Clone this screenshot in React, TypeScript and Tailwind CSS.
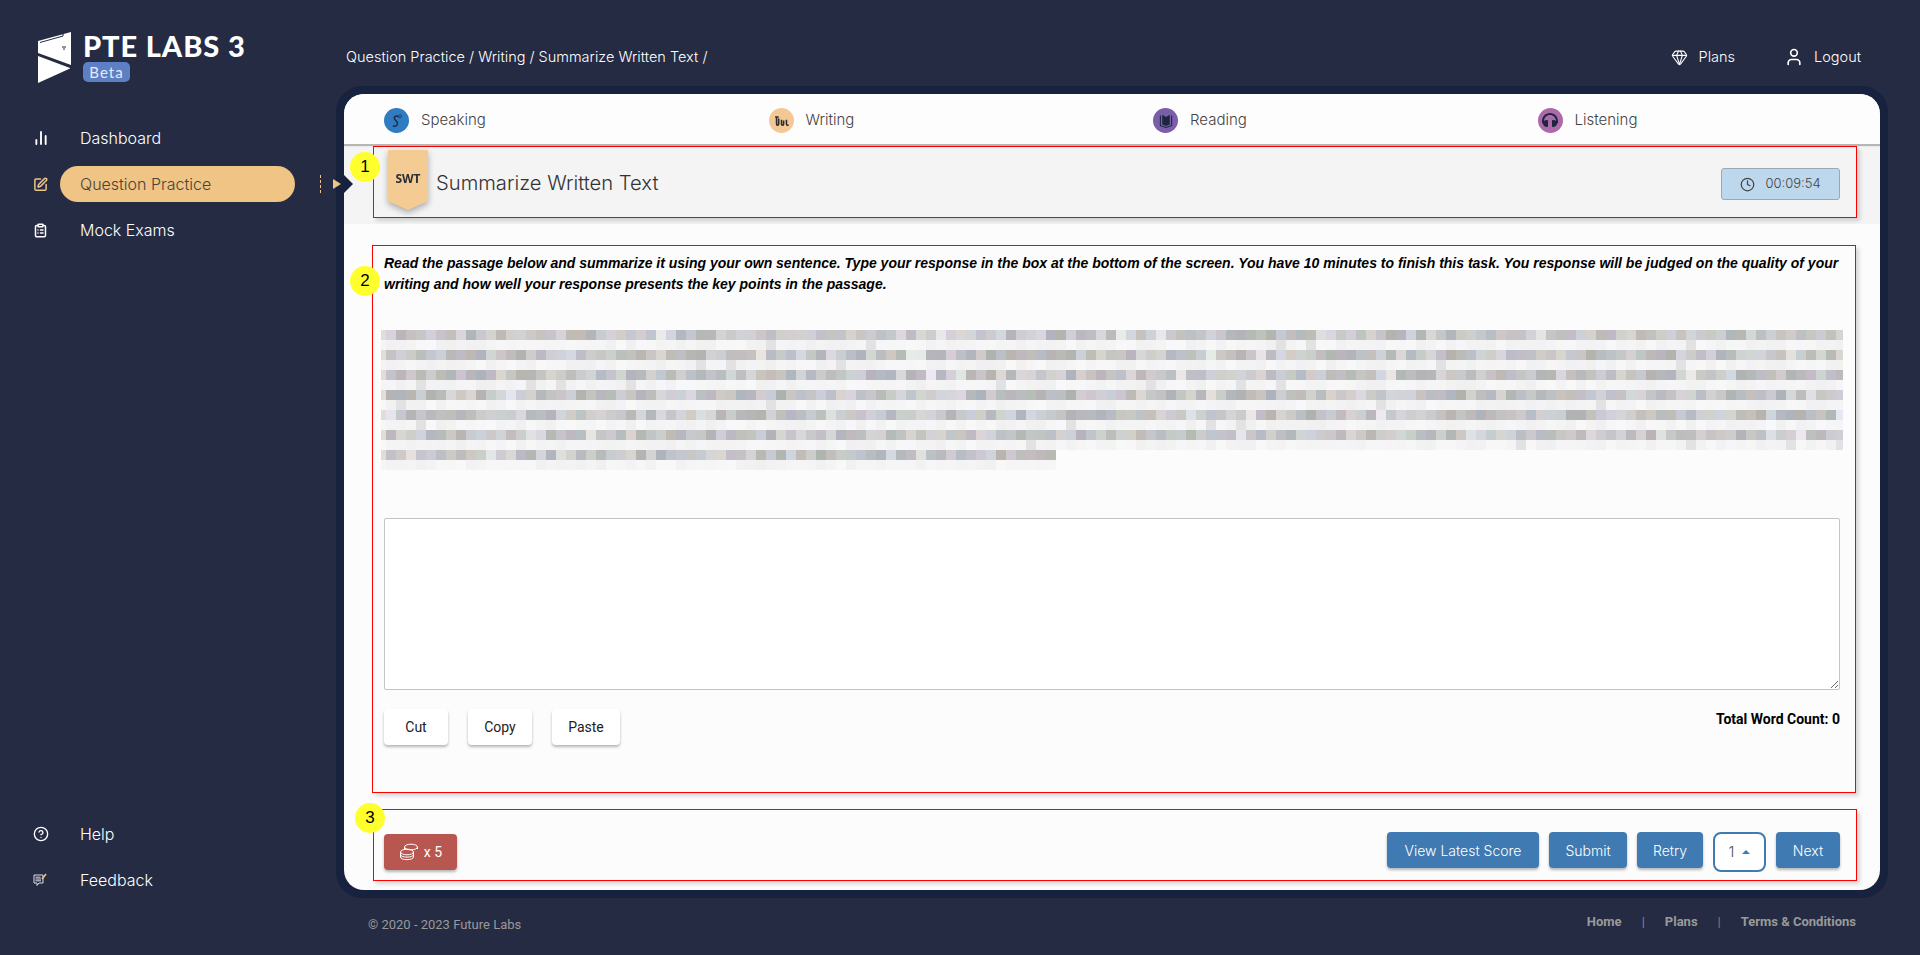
import { BarChart2, ClipboardList, Clock, CircleHelp, Gem, SquarePen, User } from 'lucide-react';
import { FaHeadphones } from 'react-icons/fa';
import type { ReactNode } from 'react';

const gothic = "font-['Inter','Open_Sans',sans-serif]";

// pixelated passage: 7 lines, each a dark row and a light row of 10px cells
function makeRows() {
  let seed = 4821;
  const rand = () => {
    seed = (seed * 16807) % 2147483647;
    return seed / 2147483647;
  };
  const rows: string[][] = [];
  for (let line = 0; line < 7; line++) {
    const count = line === 6 ? 68 : 147;
    const dark: string[] = [];
    const light: string[] = [];
    for (let i = 0; i < count; i++) {
      const tintR = Math.round(rand() * 14 - 7);
      const tintB = Math.round(rand() * 18 - 7);
      const gap = rand() < 0.03;
      const base = gap ? 222 + rand() * 14 : 178 + rand() * 38;
      const g = Math.round(base);
      dark.push(`rgb(${g + tintR},${g},${g + tintB})`);
      const soft = rand() < 0.03 ? 226 : 240 + Math.round(rand() * 8);
      light.push(`rgb(${soft},${soft},${soft + Math.round(rand() * 2)})`);
    }
    dark[0] = '#e6dcd6';
    rows.push(dark, light);
  }
  return rows;
}

const rows = makeRows();

function Logo() {
  return (
    <div className="flex items-start pl-[38px] pt-[31px]">
      <svg viewBox="0 0 34 52" className="w-[34px] h-[52px] flex-none fill-white">
        <path d="M0 10 L33 1 L33 34 L0 22 Z" />
        <path d="M0 25 L32 37 L32 37.5 L0 52 Z" />
        <path d="M2 11.5 L25 5 V3" fill="none" stroke="#252b42" strokeWidth="1" />
        <path d="M24 16 h4 M25 18 h2" stroke="#252b42" strokeWidth="1" />
      </svg>
      <div className="ml-[11px] flex flex-col items-start">
        <span className="font-['Lato',sans-serif] font-black text-[29px] leading-[30px] tracking-[0.9px] text-white whitespace-nowrap">PTE LABS 3</span>
        <span className="mt-[1px] w-[47px] h-[20px] rounded-[5px] bg-[#5d7fc4] text-center font-['Lato',sans-serif] text-[15px] leading-[20px] tracking-[1px] text-[#e4ebf8]">Beta</span>
      </div>
    </div>
  );
}

function NavItem({ icon, label, active }: { icon: ReactNode; label: string; active?: boolean }) {
  return (
    <div className="flex items-center h-[36px] pl-[33px]">
      <div className={`w-[27px] flex-none ${active ? 'text-[#efc484]' : 'text-white'}`}>{icon}</div>
      <div className={`w-[235px] flex-none h-[36px] rounded-full pl-[20px] flex items-center ${gothic} font-light text-[16px] ${active ? 'bg-[#efc484] text-[#4a4338]' : 'text-white'}`}>
        {label}
      </div>
      {active && (
        <>
          <div className="ml-[25px] flex-none h-[18px] border-l border-dashed border-[#efc484]" />
          <svg viewBox="0 0 8 10" className="ml-[12px] flex-none w-[8px] h-[10px] fill-[#efc484]">
            <path d="M0 0 L8 5 L0 10 Z" />
          </svg>
        </>
      )}
    </div>
  );
}

function Sidebar() {
  return (
    <aside className="relative z-10 w-[336px] flex-none flex flex-col pb-[57px]">
      <Logo />
      <nav className="mt-[37px] flex flex-col gap-[10px]">
        <NavItem icon={<BarChart2 size={16} strokeWidth={2.8} />} label="Dashboard" />
        <NavItem active icon={<SquarePen size={15} strokeWidth={2.4} />} label="Question Practice" />
        <NavItem icon={<ClipboardList size={15} strokeWidth={2.4} />} label="Mock Exams" />
      </nav>
      <nav className="mt-auto flex flex-col gap-[10px]">
        <NavItem icon={<CircleHelp size={16} strokeWidth={2} />} label="Help" />
        <NavItem
          icon={
            <svg viewBox="0 0 14 14" className="w-[14px] h-[14px] fill-none stroke-[#d8dde8]" strokeWidth="1">
              <path d="M1 2 H10 V10 H6 L4 12.5 V10 H1 Z" />
              <path d="M2.5 4.2 H7.5 M2.5 6 H8 M2.5 7.8 H8" />
              <path d="M9 6 L13 1" strokeWidth="1.6" className="stroke-[#efc484]" />
            </svg>
          }
          label="Feedback"
        />
      </nav>
    </aside>
  );
}

function TabItem({ color, icon, label }: { color: string; icon: ReactNode; label: string }) {
  return (
    <div className="flex items-center">
      <div className={`w-[25px] h-[25px] rounded-full flex items-center justify-center ${color}`}>{icon}</div>
      <span className={`ml-[12px] ${gothic} font-light text-[15px] text-[#444]`}>{label}</span>
    </div>
  );
}

function Marker({ n, className }: { n: number; className: string }) {
  return (
    <div className={`absolute w-[30px] h-[30px] rounded-full bg-[#ffff2e] flex items-center justify-center font-['Liberation_Sans',sans-serif] text-[17px] text-black z-10 ${className}`}>
      {n}
    </div>
  );
}

function WhiteButton({ label, width }: { label: string; width: string }) {
  return (
    <button className={`${width} h-[36px] rounded-[4px] bg-white font-['Roboto',sans-serif] text-[14px] text-[#222] shadow-[0_2px_3px_rgba(0,0,0,0.28)]`}>
      {label}
    </button>
  );
}

function BlueButton({ label, width }: { label: string; width: string }) {
  return (
    <button className={`${width} h-[36px] rounded-[4px] bg-[#3f7ab3] ${gothic} font-light text-[14px] text-white shadow-[0_2px_3px_rgba(0,0,0,0.28)]`}>
      {label}
    </button>
  );
}

function Passage() {
  return (
    <div className="-ml-[3px] w-[1462px] overflow-hidden">
      {rows.map((row, r) => (
        <div key={r} className="flex h-[10px]">
          {row.map((c, i) => (
            <div key={i} className={`h-[10px] flex-none ${i === 0 ? 'w-[5px]' : 'w-[10px]'}`} style={{ backgroundColor: c }} />
          ))}
        </div>
      ))}
    </div>
  );
}

function Panel() {
  return (
    <div className="relative bg-[#16223e] rounded-[26px] p-[8px]">
      <svg viewBox="0 0 9 18" className="absolute left-[8px] top-[89px] w-[9px] h-[18px] fill-[#16223e] z-10">
        <path d="M0 0 L9 9 L0 18 Z" />
      </svg>
      <div className="h-[796px] rounded-[20px] overflow-hidden bg-[#fcfcfc]">
        <div className="relative z-[1] h-[50px] bg-[#fdfdfd] pl-[40px] pt-[2px] grid grid-cols-[384.5px_384.5px_384.5px_1fr] items-center shadow-[0_2px_1px_rgba(0,0,0,0.25)]">
          <TabItem
            color="bg-[#2f7cc1]"
            label="Speaking"
            icon={
              <svg viewBox="0 0 24 24" className="w-[17px] h-[17px] fill-none stroke-[#1d2b48]" strokeWidth="2">
                <path d="M15 7 C11 4 7 7 10 11 C13 14 15 16 12 19 C10 21 8 20 7 19" />
                <circle cx="17" cy="6" r="2" strokeWidth="1" />
              </svg>
            }
          />
          <TabItem
            color="bg-[#f4c894]"
            label="Writing"
            icon={
              <svg viewBox="0 0 24 24" className="w-[17px] h-[17px] fill-none stroke-[#2b2b2b]" strokeWidth="2.2">
                <path d="M5 7 V17 C5 19 8 19 8 17 V9 M12 11 V17 C12 19 15 19 15 17 V12 M19 11 V17 C19 19 21 19 22 18 M3 7 H8" />
              </svg>
            }
          />
          <TabItem
            color="bg-[#7a5ea8]"
            label="Reading"
            icon={
              <svg viewBox="0 0 24 24" className="w-[18px] h-[18px]">
                <path d="M7 5 L12 8 L17 5 V18 L12 20 L7 18 Z" fill="#1d2540" />
                <path d="M4.5 6 V19.5 L12 22 L19.5 19.5 V6" fill="none" stroke="#1d2540" strokeWidth="1.4" />
              </svg>
            }
          />
          <TabItem color="bg-[#ac6aa9]" label="Listening" icon={<FaHeadphones size={16} className="text-[#1d2540]" />} />
        </div>

        <div className="h-[80px] bg-[#f4f4f4] pt-[2px] pl-[29px] pr-[23px]">
          <div className="relative h-[72px] border border-[#f00] flex items-start shadow-[3px_3px_4px_rgba(0,0,0,0.15)]">
            <Marker n={1} className="-left-[24px] top-[5px]" />
            <div className="ml-[14px] mt-[3px] drop-shadow-[0_3px_3px_rgba(0,0,0,0.3)]">
              <div className="w-[40px] h-[60px] bg-[#f5cb94] pt-[21px] text-center font-['Open_Sans',sans-serif] font-bold text-[12px] leading-[16px] text-[#2c2c34] [clip-path:polygon(0_0,100%_0,100%_85%,50%_100%,0_85%)]">
                SWT
              </div>
            </div>
            <h1 className={`ml-[8px] mt-[22px] ${gothic} font-light text-[20.2px] leading-[28px] text-[#333]`}>Summarize Written Text</h1>
            <div className={`ml-auto mr-[16px] mt-[21px] w-[119px] h-[32px] rounded-[3px] bg-[#bdd7ec] border border-[#9aa8b4] flex items-center justify-center gap-[10px] ${gothic} font-light text-[13px] text-[#444]`}>
              <Clock size={15} strokeWidth={2} />
              00:09:54
            </div>
          </div>
        </div>

        <div className="pt-[21px] pl-[28px] pr-[24px]">
          <div className="relative h-[548px] border border-[#f00] pl-[11px] pr-[15px] pt-[7px] shadow-[3px_3px_4px_rgba(0,0,0,0.15)]">
            <Marker n={2} className="-left-[23px] top-[20px]" />
            <p className="font-['Liberation_Sans',sans-serif] font-bold italic text-[14px] leading-[21px] text-black">
              Read the passage below and summarize it using your own sentence. Type your response in the box at the bottom of the screen. You have 10 minutes to finish this task. You response will be judged on the quality of your writing and how well your response presents the key points in the passage.
            </p>
            <div className="mt-[35px]">
              <Passage />
            </div>
            <textarea className="mt-[48px] block w-full h-[172px] rounded-[2px] border border-[#c4c4c4] bg-white outline-none" />
            <div className="mt-[19px] flex items-start">
              <div className="flex gap-[20px]">
                <WhiteButton label="Cut" width="w-[64px]" />
                <WhiteButton label="Copy" width="w-[64px]" />
                <WhiteButton label="Paste" width="w-[68px]" />
              </div>
              <span className="ml-auto font-['Roboto',sans-serif] font-bold text-[14px] leading-[20px] text-black">Total Word Count: 0</span>
            </div>
          </div>
        </div>

        <div className="pt-[16px] pl-[29px] pr-[23px]">
          <div className="relative h-[72px] border border-[#f00] pl-[10px] pr-[16px] pt-[22px] flex items-start justify-between shadow-[3px_3px_4px_rgba(0,0,0,0.15)]">
            <Marker n={3} className="-left-[19px] -top-[7px]" />
            <button className="mt-[2px] w-[73px] h-[36px] rounded-[4px] bg-[#b85750] flex items-center justify-center gap-[5px] font-['Roboto',sans-serif] text-[14px] text-white shadow-[0_2px_3px_rgba(0,0,0,0.28)]">
              <svg viewBox="0 0 20 18" className="w-[20px] h-[18px] fill-none stroke-white" strokeWidth="1">
                <ellipse cx="12" cy="4" rx="6.5" ry="2.8" />
                <path d="M5.5 4 V7 M18.5 4 V6" />
                <ellipse cx="8" cy="9" rx="6.5" ry="2.8" />
                <path d="M1.5 9 V14 C1.5 17.5 14.5 17.5 14.5 14 V9 M1.5 11.5 C1.5 15 14.5 15 14.5 11.5" />
              </svg>
              x 5
            </button>
            <div className="flex items-start gap-[10px]">
              <BlueButton label="View Latest Score" width="w-[152px]" />
              <BlueButton label="Submit" width="w-[78px]" />
              <BlueButton label="Retry" width="w-[66px]" />
              <div className="w-[53px] h-[40px] rounded-[8px] border-2 border-[#3f7ab3] bg-white flex items-center justify-center gap-[8px]">
                <span className={`${gothic} font-light text-[15px] text-[#555]`}>1</span>
                <svg viewBox="0 0 8 4" className="w-[8px] h-[4px] fill-[#3f7ab3]">
                  <path d="M0 4 L4 0 L8 4 Z" />
                </svg>
              </div>
              <BlueButton label="Next" width="w-[64px]" />
            </div>
          </div>
        </div>
      </div>
    </div>
  );
}

export default function App() {
  return (
    <div className="h-[955px] overflow-hidden bg-[#252b42] flex">
      <Sidebar />
      <main className="flex-1 min-w-0 pr-[32px] flex flex-col">
        <header className={`h-[86px] flex items-end justify-between pl-[10px] pb-[18px] ${gothic} font-light text-[14.5px] text-white`}>
          <span>Question Practice / Writing / Summarize Written Text /</span>
          <div className="flex items-center mr-[27px]">
            <Gem size={17} strokeWidth={1.6} />
            <span className="ml-[11px]">Plans</span>
            <User size={20} strokeWidth={2} className="ml-[49px]" />
            <span className="ml-[10px]">Logout</span>
          </div>
        </header>
        <Panel />
        <footer className="flex justify-between pl-[32px] pr-[32px] pt-[15px]">
          <span className="mt-[2px] font-['Roboto',sans-serif] text-[13px] leading-[20px] text-[#9a9a9a]">© 2020 - 2023 Future Labs</span>
          <div className="flex items-start font-['Roboto',sans-serif] font-bold text-[13px] leading-[18px] text-[#9a9a9a]">
            <span>Home</span>
            <span className="mx-[20px] font-normal text-[#6f8aa8]">|</span>
            <span>Plans</span>
            <span className="mx-[20px] font-normal text-[#a0707a]">|</span>
            <span>Terms &amp; Conditions</span>
          </div>
        </footer>
      </main>
    </div>
  );
}
